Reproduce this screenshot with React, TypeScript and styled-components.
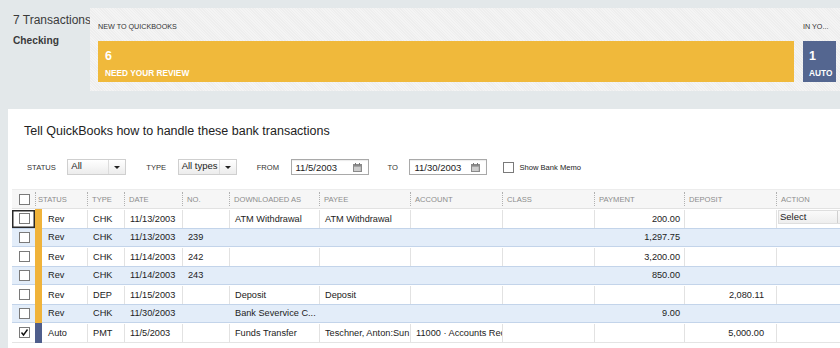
import React from 'react';
import styled, { createGlobalStyle } from 'styled-components';

const GlobalStyle = createGlobalStyle`
  html, body {
    margin: 0;
    padding: 0;
  }
  body {
    font-family: "Liberation Sans", Arial, sans-serif;
    background: #e3e8ea;
    overflow: hidden;
  }
`;

const Page = styled.div`
  width: 840px;
  height: 348px;
  overflow: hidden;
  background: #e3e8ea;
  display: flex;
  flex-direction: column;
`;

const TopBar = styled.div`
  display: flex;
  height: 91px;
  flex: 0 0 auto;
`;

const Account = styled.div`
  width: 90px;
  flex: 0 0 90px;
  padding: 13px 0 0 13px;
  box-sizing: border-box;
  color: #3a3a3a;
  .count {
    font-size: 12px;
    line-height: 14px;
    white-space: nowrap;
  }
  .name {
    margin-top: 8px;
    font-size: 10.2px;
    line-height: 12px;
    font-weight: bold;
  }
`;

const Summary = styled.div`
  flex: 1;
  margin-top: 8px;
  height: 83px;
  display: flex;
  gap: 9px;
  padding-left: 8px;
  background: repeating-linear-gradient(45deg, #f4f4f4 0 1px, #eeeeee 1px 2px);
  overflow: hidden;
`;

const Group = styled.div<{ $w: number }>`
  width: ${(p) => p.$w}px;
  flex: 0 0 ${(p) => p.$w}px;
  display: flex;
  flex-direction: column;
`;

const GroupLabel = styled.div`
  padding-top: 14px;
  height: 10px;
  line-height: 10px;
  font-size: 7.2px;
  color: #333;
  white-space: nowrap;
  overflow: hidden;
`;

const Tile = styled.div<{ $bg: string; $pl: number }>`
  margin-top: 9px;
  height: 41px;
  box-sizing: border-box;
  background: ${(p) => p.$bg};
  color: #fff;
  padding: 8px 0 0 ${(p) => p.$pl}px;
  font-weight: bold;
  overflow: hidden;
  .num {
    font-size: 12.5px;
    line-height: 14px;
  }
  .cap {
    margin-top: 5px;
    font-size: 8.3px;
    line-height: 10px;
    white-space: nowrap;
  }
`;

const Main = styled.div`
  flex: 1;
  margin: 18px 0 0 8px;
  background: #fff;
  padding: 14px 0 0 4px;
  overflow: hidden;
`;

const Title = styled.div`
  padding-left: 12px;
  font-size: 12.5px;
  line-height: 16px;
  color: #222;
  white-space: nowrap;
`;

const Filters = styled.div`
  margin-top: 20px;
  padding-left: 15px;
  height: 16px;
  display: flex;
  align-items: center;
`;

const FilterLabel = styled.span`
  font-size: 7.6px;
  color: #333;
  margin-right: 11.5px;
  white-space: nowrap;
`;

const Select = styled.div<{ $w: number; $mr?: number }>`
  width: ${(p) => p.$w}px;
  height: 16px;
  box-sizing: border-box;
  border: 1px solid #cfcfcf;
  background: linear-gradient(#ffffff, #ececec);
  display: flex;
  margin-right: ${(p) => p.$mr ?? 20}px;
  .val {
    flex: 1;
    padding: 0 0 0 3px;
    font-size: 9.5px;
    line-height: 12px;
    color: #222;
    white-space: nowrap;
  }
  .arrow {
    width: 16px;
    border-left: 1px solid #dcdcdc;
    display: flex;
    align-items: center;
    justify-content: center;
  }
`;

const Caret = styled.span`
  width: 0;
  height: 0;
  border-left: 3px solid transparent;
  border-right: 3px solid transparent;
  border-top: 3px solid #222;
`;

const DateInput = styled.div<{ $mr: number }>`
  width: 78px;
  height: 16px;
  box-sizing: border-box;
  border: 1px solid #a9a9a9;
  box-shadow: inset 0 1px 1px rgba(0, 0, 0, 0.08);
  display: flex;
  align-items: center;
  justify-content: space-between;
  padding: 0 6px 0 4px;
  margin-right: ${(p) => p.$mr}px;
  font-size: 9.5px;
  color: #222;
`;

const Box = styled.span<{ $size?: number }>`
  width: ${(p) => p.$size ?? 11}px;
  height: ${(p) => p.$size ?? 11}px;
  box-sizing: border-box;
  border: 1px solid #7a7a7a;
  background: #fff;
  display: inline-flex;
  align-items: center;
  justify-content: center;
  flex: 0 0 auto;
`;

const MemoText = styled.span`
  margin-left: 5px;
  font-size: 7.6px;
  color: #222;
  white-space: nowrap;
`;

const cols = '23px 52px 37px 58px 47px 90px 91px 92px 92px 90px 92px 80px';

const Table = styled.div`
  margin-top: 14px;
  width: 844px;
`;

const HeadRow = styled.div`
  display: grid;
  grid-template-columns: ${cols};
  height: 20px;
  box-sizing: border-box;
  background: #f6f6f6;
  border-top: 1px solid #ececec;
  border-bottom: 1px solid #e2e2e2;
`;

const HeadCell = styled.div<{ $pl?: number; $sep?: boolean }>`
  position: relative;
  display: flex;
  align-items: center;
  justify-content: ${(p) => (p.$sep ? 'flex-start' : 'center')};
  padding-left: ${(p) => p.$pl ?? 5}px;
  font-size: 7.6px;
  color: #8c8c8c;
  white-space: nowrap;
  &::before {
    content: '';
    display: ${(p) => (p.$sep ? 'block' : 'none')};
    position: absolute;
    left: 0;
    top: 2px;
    bottom: 2px;
    border-left: 1px dotted #b0b0b0;
  }
`;

const BodyRow = styled.div<{ $blue: boolean }>`
  display: grid;
  grid-template-columns: ${cols};
  height: 19.5px;
  box-sizing: border-box;
  background: ${(p) => (p.$blue ? '#e3edf9' : '#fff')};
  border-top: 1px solid ${(p) => (p.$blue ? '#c3d4ea' : 'transparent')};
  border-bottom: 1px solid ${(p) => (p.$blue ? '#c3d4ea' : '#e4e4e4')};
  margin-top: ${(p) => (p.$blue ? '-1px' : '0')};
`;

const Cell = styled.div<{ $right?: boolean; $pr?: number; $line?: boolean }>`
  display: flex;
  align-items: center;
  justify-content: ${(p) => (p.$right ? 'flex-end' : 'flex-start')};
  padding: 0 ${(p) => p.$pr ?? 0}px 0 5px;
  font-size: 9.2px;
  color: #222;
  white-space: nowrap;
  overflow: hidden;
  border-left: 1px solid ${(p) => (p.$line ? '#e2e2e2' : 'transparent')};
  min-width: 0;
`;

const CheckCell = styled.div<{ $focus?: boolean }>`
  display: flex;
  align-items: center;
  justify-content: center;
  padding-left: 1px;
  box-shadow: ${(p) => (p.$focus ? 'inset 0 0 0 1.5px #2a2a2a' : 'none')};
`;

const StatusCell = styled.div<{ $line?: boolean }>`
  display: flex;
  align-items: stretch;
  font-size: 9.2px;
  color: #222;
`;

const Strip = styled.span<{ $auto: boolean }>`
  width: 7px;
  margin-top: -1px;
  margin-bottom: -1px;
  background: ${(p) => (p.$auto ? '#4f5e8c' : '#f0b33a')};
`;

const StatusText = styled.span`
  display: flex;
  align-items: center;
  padding-left: 6px;
`;

const ActionSelect = styled.div`
  margin: 1px 0 4px 1px;
  width: 80px;
  display: flex;
  background: linear-gradient(#fafafa, #eeeeee);
  border: 1px solid #dedede;
  font-size: 9.5px;
  color: #222;
  .val {
    width: 57px;
    padding-left: 1px;
    line-height: 12px;
    border-right: 1px solid #d0d0d0;
  }
`;

const CalendarIcon = () => (
  <svg width="9" height="9" viewBox="0 0 9 9">
    <rect x="0.5" y="1.5" width="8" height="7" fill="#bdbdbd" stroke="#8a8a8a" />
    <rect x="0.5" y="1.5" width="8" height="2" fill="#8a8a8a" />
    <rect x="2" y="0" width="1" height="2" fill="#777" />
    <rect x="6" y="0" width="1" height="2" fill="#777" />
    <g fill="#fff">
      <rect x="1.5" y="4.5" width="1" height="1" />
      <rect x="3.5" y="4.5" width="1" height="1" />
      <rect x="5.5" y="4.5" width="1" height="1" />
      <rect x="1.5" y="6.5" width="1" height="1" />
      <rect x="3.5" y="6.5" width="1" height="1" />
      <rect x="5.5" y="6.5" width="1" height="1" />
    </g>
  </svg>
);

const Tick = () => (
  <svg width="9" height="9" viewBox="0 0 9 9">
    <polyline points="1.5,4.5 3.5,7 7.5,1.5" fill="none" stroke="#111" strokeWidth="1.4" />
  </svg>
);

type Txn = {
  status: 'Rev' | 'Auto';
  type: string;
  date: string;
  no?: string;
  downloaded?: string;
  payee?: string;
  account?: string;
  payment?: string;
  deposit?: string;
  checked?: boolean;
  focus?: boolean;
  select?: boolean;
};

const txns: Txn[] = [
  { status: 'Rev', type: 'CHK', date: '11/13/2003', downloaded: 'ATM Withdrawal', payee: 'ATM Withdrawal', payment: '200.00', focus: true, select: true },
  { status: 'Rev', type: 'CHK', date: '11/13/2003', no: '239', payment: '1,297.75' },
  { status: 'Rev', type: 'CHK', date: '11/14/2003', no: '242', payment: '3,200.00' },
  { status: 'Rev', type: 'CHK', date: '11/14/2003', no: '243', payment: '850.00' },
  { status: 'Rev', type: 'DEP', date: '11/15/2003', downloaded: 'Deposit', payee: 'Deposit', deposit: '2,080.11' },
  { status: 'Rev', type: 'CHK', date: '11/30/2003', downloaded: 'Bank Severvice C...', payment: '9.00' },
  { status: 'Auto', type: 'PMT', date: '11/5/2003', downloaded: 'Funds Transfer', payee: 'Teschner, Anton:Sun', account: '11000 · Accounts Receivable', deposit: '5,000.00', checked: true },
];

const headers = ['TYPE', 'DATE', 'NO.', 'DOWNLOADED AS', 'PAYEE', 'ACCOUNT', 'CLASS', 'PAYMENT', 'DEPOSIT', 'ACTION'];

export default function App() {
  return (
    <Page>
      <GlobalStyle />
      <TopBar>
        <Account>
          <div className="count">7 Transactions</div>
          <div className="name">Checking</div>
        </Account>
        <Summary>
          <Group $w={696}>
            <GroupLabel>NEW TO QUICKBOOKS</GroupLabel>
            <Tile $bg="#f0b93b" $pl={7}>
              <div className="num">6</div>
              <div className="cap">NEED YOUR REVIEW</div>
            </Tile>
          </Group>
          <Group $w={33}>
            <GroupLabel>IN YO...</GroupLabel>
            <Tile $bg="#546690" $pl={6}>
              <div className="num">1</div>
              <div className="cap">AUTO</div>
            </Tile>
          </Group>
        </Summary>
      </TopBar>
      <Main>
        <Title>Tell QuickBooks how to handle these bank transactions</Title>
        <Filters>
          <FilterLabel>STATUS</FilterLabel>
          <Select $w={59}>
            <span className="val">All</span>
            <span className="arrow"><Caret /></span>
          </Select>
          <FilterLabel>TYPE</FilterLabel>
          <Select $w={59}>
            <span className="val">All types</span>
            <span className="arrow"><Caret /></span>
          </Select>
          <FilterLabel>FROM</FilterLabel>
          <DateInput $mr={19}>
            <span>11/5/2003</span>
            <CalendarIcon />
          </DateInput>
          <FilterLabel>TO</FilterLabel>
          <DateInput $mr={16}>
            <span>11/30/2003</span>
            <CalendarIcon />
          </DateInput>
          <Box />
          <MemoText>Show Bank Memo</MemoText>
        </Filters>
        <Table>
          <HeadRow>
            <HeadCell $pl={1}>
              <Box />
            </HeadCell>
            <HeadCell $sep $pl={3}>STATUS</HeadCell>
            {headers.map((h) => (
              <HeadCell key={h} $sep>{h}</HeadCell>
            ))}
          </HeadRow>
          {txns.map((t, i) => {
            const blue = i % 2 === 1;
            const line = !blue;
            return (
              <BodyRow key={i} $blue={blue}>
                <CheckCell $focus={t.focus}>
                  <Box>{t.checked && <Tick />}</Box>
                </CheckCell>
                <StatusCell>
                  <Strip $auto={t.status === 'Auto'} />
                  <StatusText>{t.status}</StatusText>
                </StatusCell>
                <Cell $line={line}>{t.type}</Cell>
                <Cell $line={line}>{t.date}</Cell>
                <Cell $line={line}>{t.no}</Cell>
                <Cell $line={line}>{t.downloaded}</Cell>
                <Cell $line={line}>{t.payee}</Cell>
                <Cell $line={line}>{t.account}</Cell>
                <Cell $line={line} />
                <Cell $line={line} $right $pr={4}>{t.payment}</Cell>
                <Cell $line={line} $right $pr={12}>{t.deposit}</Cell>
                <Cell $line={line} style={{ padding: 0 }}>
                  {t.select && (
                    <ActionSelect>
                      <span className="val">Select</span>
                    </ActionSelect>
                  )}
                </Cell>
              </BodyRow>
            );
          })}
        </Table>
      </Main>
    </Page>
  );
}
